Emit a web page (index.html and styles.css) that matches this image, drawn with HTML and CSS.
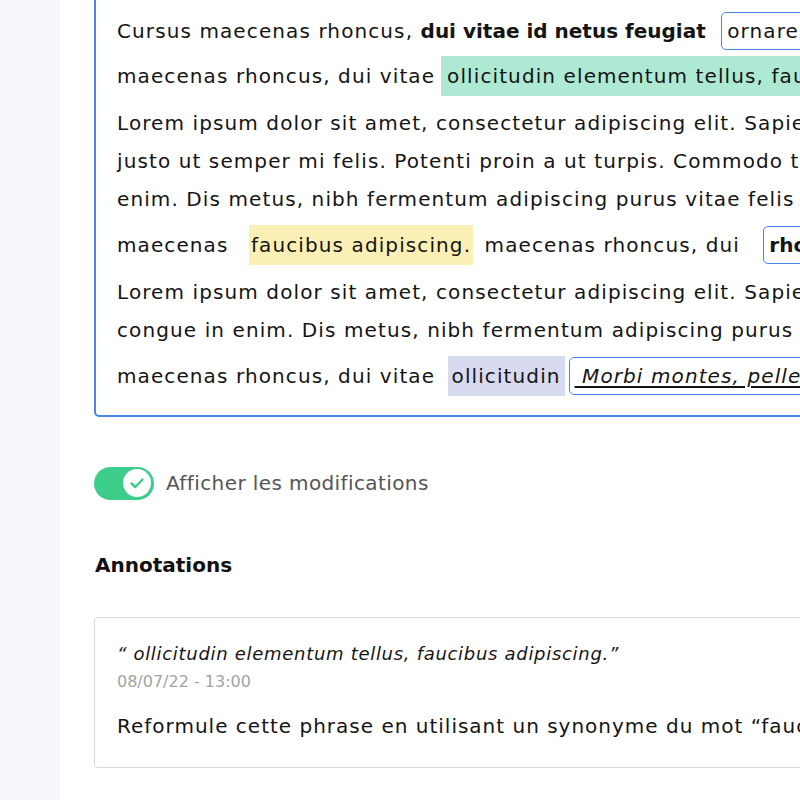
FILE: index.html
```html
<!DOCTYPE html>
<html lang="fr">
<head>
<meta charset="utf-8">
<title>Éditeur</title>
<link rel="stylesheet" href="styles.css">
</head>
<body>
<div class="layout">
  <aside class="sidebar"></aside>
  <main class="main">
    <section class="editor">
      <div class="para">
        <div class="line chip-line">Cursus maecenas rhoncus, <b class="bold">dui vitae id netus feugiat</b> <span class="chip boxed boxed-first">ornare lectus</span></div>
        <div class="line chip-line">maecenas rhoncus, dui vitae<span class="chip hl-green">ollicitudin elementum tellus, faucibus adipiscing.</span></div>
      </div>
      <div class="para">
        <div class="line">Lorem ipsum dolor sit amet, consectetur adipiscing elit. Sapien</div>
        <div class="line">justo ut semper mi felis. Potenti proin a ut turpis. Commodo tortor</div>
        <div class="line">enim. Dis metus, nibh fermentum adipiscing purus vitae felis in</div>
      </div>
      <div class="para">
        <div class="line chip-line">maecenas <span class="chip hl-yellow">faucibus adipiscing.</span> maecenas rhoncus, dui <span class="chip boxed boxed-wide"><b class="bold">rhoncus</b></span></div>
      </div>
      <div class="para">
        <div class="line">Lorem ipsum dolor sit amet, consectetur adipiscing elit. Sapien</div>
        <div class="line">congue in enim. Dis metus, nibh fermentum adipiscing purus vitae</div>
      </div>
      <div class="para">
        <div class="line chip-line">maecenas rhoncus, dui vitae <span class="chip hl-lavender">ollicitudin</span><span class="chip boxed"><em class="under"> Morbi montes, pellentesque</em></span></div>
      </div>
    </section>

    <label class="toggle-row">
      <span class="toggle">
        <span class="knob">
          <svg width="18" height="18" viewBox="0 0 18 18"><path d="M3.5 9.5 L7.3 13 L14.5 5.5" fill="none" stroke="#3ccd8b" stroke-width="2.4" stroke-linecap="round" stroke-linejoin="round"/></svg>
        </span>
      </span>
      <span class="toggle-label">Afficher les modifications</span>
    </label>

    <h2 class="section-title">Annotations</h2>

    <article class="card">
      <p class="quote">“ ollicitudin elementum tellus, faucibus adipiscing.”</p>
      <p class="date">08/07/22 - 13:00</p>
      <p class="comment">Reformule cette phrase en utilisant un synonyme du mot “faucibus”.</p>
    </article>
  </main>
</div>
</body>
</html>
```
FILE: styles.css
```css
html, body {
  margin: 0;
  padding: 0;
  background: #ffffff;
  overflow: hidden;
}
body {
  font-family: "DejaVu Sans", sans-serif;
  color: #141414;
}
.layout {
  display: flex;
  min-height: 800px;
  width: 900px;
}
.sidebar {
  width: 60px;
  flex: 0 0 60px;
  background: #f6f8fd;
}
.main {
  flex: 1;
  padding-left: 34px;
}
.editor {
  width: 760px;
  margin-top: -10px;
  border: 2px solid #4b83ee;
  border-radius: 5px;
  padding: 16.5px 0 16px 21px;
  box-sizing: border-box;
}
.para + .para {
  margin-top: 5px;
}
.line {
  height: 38px;
  line-height: 38px;
  white-space: pre;
  font-size: 20px;
  letter-spacing: 1.1px;
}
.chip-line {
  height: 45px;
  line-height: 45px;
}
.bold {
  font-weight: 700;
  letter-spacing: 0;
}
.chip {
  display: inline-block;
  vertical-align: middle;
  line-height: 24px;
  padding: 8px 6px;
  margin-top: -2px;
}
.boxed {
  border: 1.5px solid #4b83ee;
  border-radius: 5px;
  padding: 6px 5px;
  margin-left: 2px;
}
.boxed-first {
  margin-left: 8px;
}
.boxed-wide {
  margin-left: 16px;
}
.hl-green {
  background: #aeead3;
  margin-left: 6px;
}
.hl-yellow {
  background: #faf0b5;
  padding: 8px 2px;
  margin-left: 13px;
  margin-right: 4px;
}
.hl-lavender {
  background: #d8daf0;
  padding: 8px 4px;
  margin-left: 5px;
  margin-right: 2px;
}
.under {
  font-style: italic;
  text-decoration: underline;
  text-underline-offset: 3px;
}
.toggle-row {
  display: flex;
  align-items: center;
  gap: 12px;
  margin-top: 50px;
}
.toggle {
  width: 60px;
  height: 33px;
  border-radius: 17px;
  background: #3ccd8b;
  display: flex;
  align-items: center;
  justify-content: flex-end;
  padding-right: 3px;
  box-sizing: border-box;
}
.knob {
  width: 28px;
  height: 28px;
  border-radius: 50%;
  background: #ffffff;
  display: flex;
  align-items: center;
  justify-content: center;
}
.toggle-label {
  font-size: 20px;
  color: #555555;
  font-weight: 400;
  letter-spacing: 0.4px;
}
.section-title {
  margin: 53px 0 0 1px;
  font-size: 20px;
  font-weight: 700;
  line-height: 24px;
  color: #111111;
}
.card {
  margin-top: 40px;
  width: 760px;
  box-sizing: border-box;
  border: 1px solid #d9d9d9;
  border-radius: 4px;
  padding: 24px 0 28px 22px;
}
.quote {
  margin: 0;
  font-size: 18px;
  line-height: 24px;
  font-style: italic;
  letter-spacing: 0.7px;
}
.date {
  margin: 6px 0 0;
  font-size: 16px;
  line-height: 20px;
  color: #a3a3a3;
  font-weight: 500;
}
.comment {
  margin: 21px 0 0;
  font-size: 20px;
  line-height: 26px;
  letter-spacing: 1px;
  white-space: nowrap;
}
```
